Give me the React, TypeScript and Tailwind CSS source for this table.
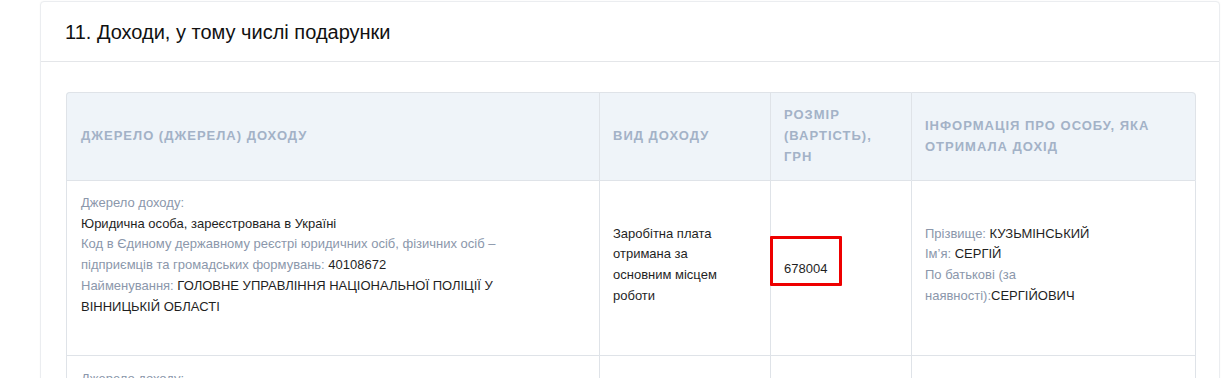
const label = 'text-[#8b97ab]';
const value = 'text-[#1f1f1f]';

export default function App() {
  return (
    <div className="min-h-screen bg-white font-['Liberation_Sans',Arial,sans-serif] pt-px">
      <div className="ml-10 w-[1180px] rounded border border-[#ebedf0] bg-white shadow-[0_0_2px_rgba(0,0,0,0.04)]">
        {/* Header */}
        <div className="h-[60px] border-b border-[#e4e6e9] px-6 flex items-center">
          <h2 className="text-[20px] text-[#111] leading-none pt-px">
            11. Доходи, у тому числі подарунки
          </h2>
        </div>

        <div className="pt-[30px] px-[25px]">
          <table className="w-[1130px] border-separate border-spacing-0 text-[13px] leading-[20.7px]">
            <thead>
              <tr className="bg-[#eff4f9]">
                <th className="w-[533px] h-[89px] rounded-tl border-l border-t border-b border-[#dfe3e8] px-[14px] text-left align-middle font-bold uppercase tracking-[1px] text-[#a3b2c7]">
                  Джерело (джерела) доходу
                </th>
                <th className="w-[171px] border-l border-t border-b border-[#dfe3e8] px-[13px] text-left align-middle font-bold uppercase tracking-[1px] text-[#a3b2c7]">
                  Вид доходу
                </th>
                <th className="w-[141px] border-l border-t border-b border-[#dfe3e8] px-[13px] text-left align-middle font-bold uppercase tracking-[1px] text-[#a3b2c7]">
                  <div className="w-[100px]">Розмір (вартість), грн</div>
                </th>
                <th className="rounded-tr border-l border-r border-t border-b border-[#dfe3e8] px-[13px] text-left align-middle font-bold uppercase tracking-[1px] text-[#a3b2c7]">
                  <div className="w-[240px]">Інформація про особу, яка отримала дохід</div>
                </th>
              </tr>
            </thead>
            <tbody>
              <tr>
                <td className="h-[175px] border-l border-b border-[#dfe3e8] px-[14px] pt-[12px] pb-[37px] align-top">
                  <div className="w-[430px]">
                    <div className={label}>Джерело доходу:</div>
                    <div className={value}>Юридична особа, зареєстрована в Україні</div>
                    <div>
                      <span className={label}>
                        Код в Єдиному державному реєстрі юридичних осіб, фізичних осіб – підприємців та громадських формувань:
                      </span>{' '}
                      <span className={value}>40108672</span>
                    </div>
                    <div>
                      <span className={label}>Найменування:</span>{' '}
                      <span className={value}>ГОЛОВНЕ УПРАВЛІННЯ НАЦІОНАЛЬНОЇ ПОЛІЦІЇ У ВІННИЦЬКІЙ ОБЛАСТІ</span>
                    </div>
                  </div>
                </td>
                <td className="border-l border-b border-[#dfe3e8] px-[13px] pt-[13px] pb-[19px] align-middle">
                  <div className={`w-[108px] ${value}`}>Заробітна плата отримана за основним місцем роботи</div>
                </td>
                <td className="border-l border-b border-[#dfe3e8] px-[13px] pt-[23px] pb-[21px] align-middle">
                  <div className="relative">
                    <span className={value}>678004</span>
                    <div className="absolute left-[-14px] top-[-23px] w-[72px] h-[50px] border-[3px] border-[#ee0000] rounded-[1px]" />
                  </div>
                </td>
                <td className="border-l border-r border-b border-[#dfe3e8] px-[13px] pt-[13px] pb-[19px] align-middle">
                  <div className="w-[215px]">
                    <div>
                      <span className={label}>Прізвище:</span> <span className={value}>КУЗЬМІНСЬКИЙ</span>
                    </div>
                    <div>
                      <span className={label}>Ім’я:</span> <span className={value}>СЕРГІЙ</span>
                    </div>
                    <div>
                      <span className={label}>По батькові (за наявності):</span>
                      <span className={value}>СЕРГІЙОВИЧ</span>
                    </div>
                  </div>
                </td>
              </tr>
              <tr>
                <td className="border-l border-[#dfe3e8] px-[14px] pt-[13px] align-top">
                  <div className={label}>Джерело доходу:</div>
                  <div className={value}>Юридична особа, зареєстрована в Україні</div>
                </td>
                <td className="border-l border-[#dfe3e8]" />
                <td className="border-l border-[#dfe3e8]" />
                <td className="border-l border-r border-[#dfe3e8]" />
              </tr>
            </tbody>
          </table>
        </div>
      </div>
    </div>
  );
}
